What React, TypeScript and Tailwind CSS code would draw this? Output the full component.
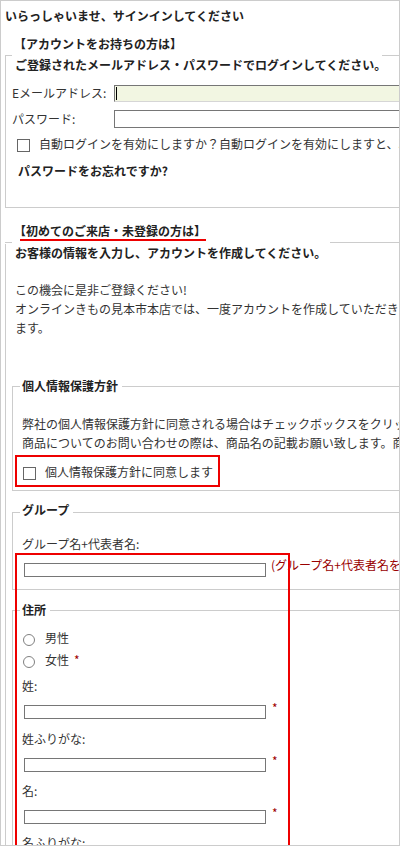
import React from "react"

// legend-like header for the two outer groups (text sits above the line)
function OuterGroup({
  title,
  titleClass,
  bodyClass,
  children,
  className,
}: {
  title: React.ReactNode
  titleClass: string
  bodyClass: string
  children: React.ReactNode
  className?: string
}) {
  return (
    <section className={className}>
      <div className="flex items-end">
        <div className="w-[7px] border-t border-[#cccccc]" />
        <div className={titleClass}>{title}</div>
        <div className="flex-1 border-t border-[#cccccc]" />
      </div>
      <div className={"border-x border-b border-[#cccccc] " + bodyClass}>{children}</div>
    </section>
  )
}

function CheckBox({ className }: { className?: string }) {
  return <span className={"block w-[13px] h-[13px] shrink-0 border border-[#666] bg-white " + (className ?? "")} />
}

function Radio() {
  return <span className="block w-[12px] h-[12px] shrink-0 mt-[5px] ml-[1px] rounded-full border border-[#808080] bg-white" />
}

function TextRow() {
  return (
    <div className="flex items-start mt-[10px]">
      <div className="ml-[2px] w-[242px] h-[14px] border border-[#767676] bg-white" />
      <span className="ml-[6px] -mt-[4px] leading-[14px] text-[#a00000]">*</span>
    </div>
  )
}

export default function App() {
  return (
    <div className="relative w-[400px] h-[846px] overflow-hidden border border-[#cccccc] bg-white text-[12px] leading-[18px] text-[#333] font-['Noto_Sans_CJK_JP','Noto_Sans',sans-serif]">
      <div className="w-[760px] pl-[4px]">
        <h1 className="mt-[6px] font-bold text-[#222]">いらっしゃいませ、サインインしてください</h1>

        <OuterGroup
          className="mt-[10px]"
          title="【アカウントをお持ちの方は】"
          titleClass="w-[370px] pl-[2px] pb-[3px] font-bold text-[#222]"
          bodyClass="pb-[27px]"
        >
          <p className="ml-[9px] font-bold text-[#222] whitespace-nowrap">
            ご登録されたメールアドレス・パスワードでログインしてください。
          </p>
          <div className="mt-[10px] ml-[6px] flex items-center">
            <label className="w-[102px]">Eメールアドレス:</label>
            <div className="w-[420px] h-[17px] flex items-center border-t border-l border-[#767676] border-b border-r border-b-[#d6d6d6] border-r-[#d6d6d6] bg-[#f2f6e2]">
              <span className="ml-[1px] w-px h-[13px] bg-black" />
            </div>
          </div>
          <div className="mt-[8px] ml-[6px] flex items-center">
            <label className="w-[102px]">パスワード:</label>
            <div className="w-[420px] h-[18px] border border-[#767676] bg-white" />
          </div>
          <div className="mt-[7px] ml-[11px] flex items-start">
            <CheckBox className="mt-[4px]" />
            <span className="ml-[9px] whitespace-nowrap">
              自動ログインを有効にしますか？自動ログインを有効にしますと、次回からメールアドレスとパスワードの入力が不要になります。
            </span>
          </div>
          <p className="mt-[9px] ml-[12px] font-bold text-[#222]">パスワードをお忘れですか?</p>
        </OuterGroup>

        <OuterGroup
          className="mt-[14px]"
          title={
            <>
              <div className="leading-[17px]">【初めてのご来店・未登録の方は】</div>
              <div className="ml-[6px] w-[186px] h-[2px] bg-[#ee0000]" />
            </>
          }
          titleClass="w-[318px] pl-[2px] pb-[2px] font-bold text-[#222]"
          bodyClass="pl-[6px] pb-[40px]"
        >
          <p className="mt-[1px] ml-[3px] font-bold text-[#222] whitespace-nowrap">
            お客様の情報を入力し、アカウントを作成してください。
          </p>
          <div className="mt-[18px] ml-[3px] leading-[19px] whitespace-nowrap">
            <div>この機会に是非ご登録ください!</div>
            <div>オンラインきもの見本市本店では、一度アカウントを作成していただきますと次回からのお買い物がスムーズになり</div>
            <div>ます。</div>
          </div>

          <fieldset className="mt-[40px] border border-[#cccccc] pl-[9px] pb-[9px]">
            <legend className="-ml-[2px] pl-[2px] pr-[4px] leading-[18px] font-bold text-[#222]">個人情報保護方針</legend>
            <div className="mt-[19px] leading-[19px] whitespace-nowrap">
              <div>弊社の個人情報保護方針に同意される場合はチェックボックスをクリックしてください。</div>
              <div>商品についてのお問い合わせの際は、商品名の記載お願い致します。商品名がない場合はお答えできません。</div>
            </div>
            <div className="mt-[11px] flex items-start">
              <CheckBox className="mt-[4px] ml-[1px]" />
              <span className="ml-[9px]">個人情報保護方針に同意します</span>
            </div>
          </fieldset>

          <fieldset className="mt-[10px] border border-[#cccccc] pl-[9px] pb-[12px]">
            <legend className="-ml-[2px] pl-[2px] pr-[4px] pb-[5px] leading-[18px] font-bold text-[#222]">グループ</legend>
            <p className="mt-[11px]">グループ名+代表者名:</p>
            <div className="mt-[10px] flex items-start">
              <div className="ml-[2px] w-[242px] h-[14px] border border-[#767676] bg-white" />
              <span className="ml-[5px] -mt-[7px] leading-[18px] text-[#990000] whitespace-nowrap">
                (グループ名+代表者名をご入力ください)
              </span>
            </div>
          </fieldset>

          <fieldset className="mt-[11px] border border-[#cccccc] pl-[9px] pb-[12px]">
            <legend className="-ml-[2px] pl-[2px] pr-[4px] leading-[18px] font-bold text-[#222]">住所</legend>
            <div className="mt-[10px] flex items-start">
              <Radio />
              <span className="ml-[10px]">男性</span>
            </div>
            <div className="mt-[4px] flex items-start">
              <Radio />
              <span className="ml-[10px]">女性</span>
              <span className="ml-[5px] mt-[2px] leading-[14px] text-[#a00000]">*</span>
            </div>
            <p className="mt-[8px]">姓:</p>
            <TextRow />
            <p className="mt-[11px]">姓ふりがな:</p>
            <TextRow />
            <p className="mt-[10px]">名:</p>
            <TextRow />
            <p className="mt-[10px]">名ふりがな:</p>
            <TextRow />
          </fieldset>
        </OuterGroup>
      </div>

      {/* red annotation frames */}
      <div className="absolute left-[14px] top-[454px] w-[205px] h-[32px] border-2 border-[#ee0000]" />
      <div className="absolute left-[14px] top-[552px] w-[275px] h-[400px] border-2 border-[#ee0000]" />
    </div>
  )
}
